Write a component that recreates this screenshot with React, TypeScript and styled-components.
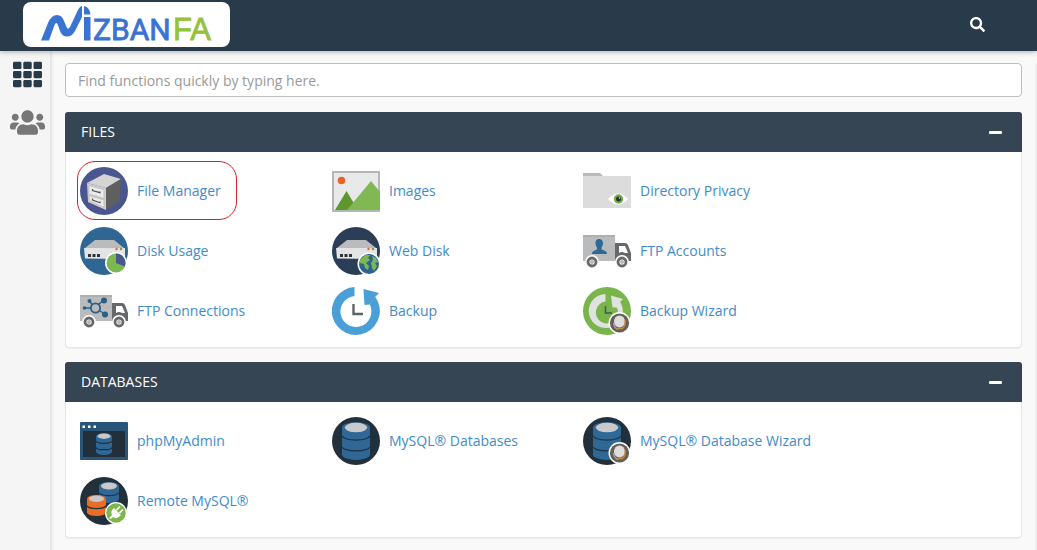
import React, { useState } from "react";
import styled, { createGlobalStyle } from "styled-components";
import { FaSearch, FaTh, FaUsers } from "react-icons/fa";

const GlobalStyle = createGlobalStyle`
  *, *::before, *::after { box-sizing: border-box; }
  body {
    margin: 0;
    background: #f9f9f9;
    color: #333;
    font-family: "Open Sans", "Noto Sans", sans-serif;
    font-size: 14px;
    line-height: 20px;
  }
  button, input { font: inherit; }
`;

const Page = styled.div`
  display: flex;
  flex-direction: column;
  min-height: 100vh;
`;

const TopBar = styled.header`
  position: relative;
  z-index: 1;
  display: flex;
  align-items: center;
  justify-content: space-between;
  height: 51px;
  padding: 0 48px 2px 23px;
  background: #293a4a;
  box-shadow: 0 1px 5px rgba(0, 0, 0, 0.3);
`;

const Logo = styled.a`
  display: flex;
  width: 207px;
  height: 45px;
  border-radius: 8px;
  background: #fff;
  text-decoration: none;
`;

const IconButton = styled.button<{ $color: string }>`
  display: flex;
  align-items: center;
  justify-content: center;
  padding: 4px;
  border: 0;
  background: none;
  color: ${(p) => p.$color};
  cursor: pointer;
`;

const Shell = styled.div`
  display: flex;
  flex: 1;
`;

const SideNav = styled.nav`
  display: flex;
  flex-direction: column;
  align-items: center;
  gap: 8px;
  width: 50px;
  padding: 5px 0 0 5px;
  background: #f5f5f5;
  box-shadow: 0 0 5px rgba(0, 0, 0, 0.2);
`;

const Main = styled.main`
  flex: 1;
  min-width: 0;
  margin-top: 12px;
  padding: 0 13px 12px 15px;
  border-right: 2px solid #efefef;
`;

const QuickFind = styled.input`
  display: block;
  width: 100%;
  height: 34px;
  margin-bottom: 15px;
  padding: 6px 12px;
  border: 1px solid #bfbfbf;
  border-radius: 4px;
  background: #fff;
  color: #555;
  &::placeholder { color: #999; opacity: 1; }
`;

const Panel = styled.section`
  margin-bottom: 14px;
  border-radius: 4px;
  background: #fff;
  box-shadow: inset 0 0 0 1px #e6e6e6, 0 1px 1px rgba(0, 0, 0, 0.05);
`;

const PanelHead = styled.div`
  display: flex;
  align-items: center;
  justify-content: space-between;
  height: 40px;
  padding: 0 16px;
  border-radius: 3px 3px 0 0;
  background: #354554;
  color: #fff;
`;

const PanelTitle = styled.h2`
  margin: 0;
  font-size: 14px;
  font-weight: 400;
`;

const Collapse = styled.button`
  display: flex;
  align-items: center;
  height: 24px;
  padding: 0 4px;
  border: 0;
  background: none;
  cursor: pointer;
  &::before {
    content: "";
    width: 13px;
    height: 3px;
    border-radius: 1px;
    background: #fff;
  }
`;

const PanelGrid = styled.div`
  display: grid;
  grid-template-columns: 252fr 251fr 424fr;
  row-gap: 12px;
  padding: 15px 15px 13px;
`;

const Feature = styled.a<{ $marked?: boolean }>`
  position: relative;
  display: flex;
  align-items: center;
  justify-self: start;
  gap: 9px;
  height: 48px;
  color: #428bca;
  text-decoration: none;
  white-space: nowrap;
  svg { flex: none; }
  &::after {
    content: "";
    display: ${(p) => (p.$marked ? "block" : "none")};
    position: absolute;
    inset: -6px -16px -5px -3px;
    border: 1px solid #dc1e26;
    border-radius: 18px;
  }
`;

const Art = ({ children }: { children: React.ReactNode }) => (
  <svg width="48" height="48" viewBox="0 0 48 48" aria-hidden="true">{children}</svg>
);

const Disc = ({ fill }: { fill: string }) => <circle cx="24" cy="24" r="24" fill={fill} />;

const Brand = () => (
  <svg width="207" height="45" viewBox="0 0 207 45" aria-label="Mizbanfa" role="img">
    <path d="M18 38.500L25 21Q28.500 13 34 13Q39 13 41 19L44 26Q45.500 28 47.500 24L54 10Q56.500 4.500 59 4V15L52 29Q49 34.500 44 34.500Q39 34.500 37 29L34.500 22Q33 19.500 31.500 23L26 38.500Z" fill="#3a74d2" />
    <path d="M61 4Q67 5.500 67.500 12.500H61Z" fill="#3a74d2" />
    <rect x="61" y="15" width="6.500" height="23.500" fill="#3a74d2" />
    <text x="70" y="38" fill="#3a74d2" stroke="#3a74d2" strokeWidth="0.800" fontFamily="Roboto, sans-serif" fontSize="30">ZBAN</text>
    <text x="150" y="38" fill="#94c23c" stroke="#94c23c" strokeWidth="0.800" fontFamily="Liberation Sans, sans-serif" fontSize="31">FA</text>
  </svg>
);

const FileManagerIcon = () => (
  <Art>
    <Disc fill="#4a5690" />
    <path d="M7 16 24 7 41 12 26 21Z" fill="#d4d4d4" />
    <path d="M7 16 26 21V43L8 35Z" fill="#cfcfcf" />
    <path d="M26 21 41 12 40 34 26 43Z" fill="#5f5f5f" />
    <path d="M9 18.500 24 22.500V31.500L9 27ZM9 28.500 24 33V40.500L9.500 34Z" fill="#ebebeb" stroke="#b5b5b5" strokeWidth="0.700" />
    <path d="M12.500 22V23.500L20 25.700V24.500M12.500 31.500V33L20 35.700V34.500" fill="none" stroke="#555" strokeWidth="1.200" />
  </Art>
);

const Server = () => (
  <>
    <path d="M5 21 15 13H34L44 21Z" fill="#b9bbbd" />
    <path d="M4 21H45V31L43 32 5 31.500Z" fill="#e3e4e5" />
    <path d="M8 27H11V30H8ZM12.500 27H15.500V30H12.500ZM17 27H20V30H17Z" fill="#333" />
    <circle cx="36.500" cy="22" r="1.200" fill="#e8632a" />
    <circle cx="41" cy="22" r="1.200" fill="#6aa33d" />
  </>
);

const DiskUsageIcon = () => (
  <Art>
    <Disc fill="#2f6694" />
    <Server />
    <circle cx="36" cy="36" r="11" fill="#fff" />
    <circle cx="36" cy="36" r="9.500" fill="#7cb850" />
    <path d="M36 36V26.500A9.500 9.500 0 0 1 44.800 39.500Z" fill="#4a5690" />
  </Art>
);

const WebDiskIcon = () => (
  <Art>
    <Disc fill="#2c3e57" />
    <Server />
    <circle cx="37" cy="37" r="11.500" fill="#fff" />
    <circle cx="37" cy="37" r="10" fill="#2d6392" />
    <path d="M28 33 33 28 38 28 36 31 38 33 34 36 37 39 36 43 33 41 32 37 28 36ZM40 29 44 31 46 35 43 36 45 39 42 44 40 41 39 36 41 33Z" fill="#7cb850" />
  </Art>
);

const Truck = ({ children }: { children: React.ReactNode }) => (
  <Art>
    <path d="M0 8H32V34H0Z" fill="#b9bbbd" />
    <path d="M0 8H32V10H0Z" fill="#adafb1" />
    <path d="M32 16H42Q44 16 45 18L48 26V34H32ZM36 19V26Q39 24 42 26H45L42 19Z" fill="#666869" fillRule="evenodd" />
    {children}
    {[9, 39].map((x) => (
      <g key={x}>
        <circle cx={x} cy="35" r="7" fill="#fff" />
        <circle cx={x} cy="35" r="4" fill="#fff" stroke="#666869" strokeWidth="2.800" />
        <circle cx={x} cy="35" r="2" fill="#b5b7b8" />
      </g>
    ))}
  </Art>
);

const FtpAccountsIcon = () => (
  <Truck>
    <path d="M16 12C21 12 20.500 18 18.500 20.500V22C20 24 24 23 24 27H9C9 23 13 24 14 22V20.500C12 18 11.500 12 16 12Z" fill="#2d6897" />
  </Truck>
);

const FtpConnectionsIcon = () => (
  <Truck>
    <path d="M9 14 15 20 24 13M4 21H15L25 27" fill="none" stroke="#2d5e87" strokeWidth="1.400" />
    <circle cx="15.500" cy="21" r="4.600" fill="#b9bbbd" stroke="#2d5e87" strokeWidth="1.800" />
    <g fill="#2d5e87">
      <circle cx="9.500" cy="14" r="2" /><circle cx="24" cy="13.500" r="3" />
      <circle cx="4.500" cy="21" r="1.800" /><circle cx="25" cy="27.500" r="3" />
    </g>
  </Truck>
);

const ImagesIcon = () => (
  <Art>
    <path d="M0 4H48V45H0Z" fill="#b5b6b6" />
    <path d="M2 6H46V43H2Z" fill="#e8e9ea" />
    <circle cx="9.500" cy="13.500" r="3.800" fill="#e8632a" />
    <path d="M3 43 14.500 24 26 43Z" fill="#5d982f" />
    <path d="M15 43 39 14 48 25V43Z" fill="#80b954" />
  </Art>
);

const PrivacyIcon = () => (
  <Art>
    <path d="M0 6H17L20 9V17H0Z" fill="#b9b9b9" />
    <path d="M0 9H48V41H0Z" fill="#dcdcdc" />
    <path d="M25 32Q35 21 45 32Q35 43 25 32Z" fill="#fff" />
    <circle cx="35.500" cy="32" r="4.700" fill="#7aad49" />
    <circle cx="35.500" cy="32" r="2.500" fill="#26352c" />
    <circle cx="36.500" cy="31" r="0.700" fill="#fff" />
  </Art>
);

const BackupIcon = () => (
  <Art>
    <path d="M22.500 0V9A15.500 15.500 0 1 0 37.800 17.500L43 9.500A24 24 0 1 1 22.500 0Z" fill="#4b9fd8" />
    <path d="M31.500 2 47 6 43.500 9.500 38 17.500 32.500 18Z" fill="#4b9fd8" />
    <path d="M21.500 17V27H31" fill="none" stroke="#606466" strokeWidth="2.400" />
  </Art>
);

const WizardBadge = () => (
  <>
    <circle cx="36.500" cy="36" r="11" fill="#fff" />
    <circle cx="36.500" cy="36" r="9.600" fill="#665f57" />
    <ellipse cx="36.500" cy="34.500" rx="5.500" ry="6" fill="#dedede" />
    <path d="M42 33Q43 38 39.500 41.500H35" fill="none" stroke="#c78b3f" strokeWidth="1.400" />
    <path d="M30.500 36Q31 41 35 42.500" fill="none" stroke="#aaa69e" strokeWidth="1.400" />
  </>
);

const BackupWizardIcon = () => (
  <Art>
    <Disc fill="#7ab54c" />
    <path d="M22.500 7V14.500A11 11 0 1 0 33.500 20L36.500 14A17 17 0 1 1 22.500 7Z" fill="#dfe2de" />
    <path d="M28 8.500 40 12 37 15 34.500 20.500 29.500 20.500Z" fill="#dfe2de" />
    <path d="M22.500 19V26H29" fill="none" stroke="#47506f" strokeWidth="1.500" />
    <WizardBadge />
  </Art>
);

type CylinderProps = { x: number; y: number; w: number; h: number; fill: string; bands: number };

/* Database drum: a rounded body, its pale lid and the seams between the platters. */
const Cylinder = ({ x, y, w, h, fill, bands }: CylinderProps) => {
  const r = w / 2;
  const e = w / 5;
  const step = (h - e) / bands;
  return (
    <>
      <path d={`M${x} ${y + e}A${r} ${e} 0 0 1 ${x + w} ${y + e}V${y + h - e}A${r} ${e} 0 0 1 ${x} ${y + h - e}Z`} fill={fill} />
      <ellipse cx={x + r} cy={y + e} rx={r * 0.8} ry={e * 0.85} fill="#c9c8ca" />
      {Array.from({ length: bands - 1 }, (_, i) => (
        <path
          key={i}
          d={`M${x} ${y + e / 2 + step * (i + 1)}A${r} ${e * 0.8} 0 0 0 ${x + w} ${y + e / 2 + step * (i + 1)}`}
          fill="none"
          stroke="#22323f"
          strokeWidth="1.200"
        />
      ))}
    </>
  );
};

const DatabasesIcon = ({ wizard }: { wizard?: boolean }) => (
  <Art>
    <Disc fill="#22303c" />
    <Cylinder x={10} y={5} w={28} h={38} fill="#2f6797" bands={3} />
    {wizard && <WizardBadge />}
  </Art>
);

const PhpMyAdminIcon = () => (
  <Art>
    <rect y="5" width="48" height="38" rx="1" fill="#295579" />
    <path d="M3 14H45V40H3Z" fill="#22303c" />
    <path d="M2.500 8.500H5V11H2.500ZM8 8.500H10.500V11H8ZM13.500 8.500H16V11H13.500Z" fill="#fff" />
    <Cylinder x={16} y={16} w={16} h={22} fill="#2f6797" bands={3} />
  </Art>
);

const RemoteMysqlIcon = () => (
  <Art>
    <Disc fill="#22303c" />
    <Cylinder x={19} y={5} w={20} h={21} fill="#2f6797" bands={2} />
    <Cylinder x={7} y={18} w={19} h={21} fill="#e96d25" bands={2} />
    <circle cx="36" cy="36" r="11" fill="#fff" />
    <circle cx="36" cy="36" r="9.700" fill="#7cb64d" />
    <path d="M34 31 41 38Q37 43 33 40L31 42 29 41 32 38Q30 34 34 31Z" fill="#fff" />
    <path d="M36.500 33 40 29.500M39.500 36 43 32.500" fill="none" stroke="#fff" strokeWidth="1.700" />
  </Art>
);

type Item = { label: string; icon: React.ReactNode; marked?: boolean };

const files: Item[] = [
  { label: "File Manager", icon: <FileManagerIcon />, marked: true },
  { label: "Images", icon: <ImagesIcon /> },
  { label: "Directory Privacy", icon: <PrivacyIcon /> },
  { label: "Disk Usage", icon: <DiskUsageIcon /> },
  { label: "Web Disk", icon: <WebDiskIcon /> },
  { label: "FTP Accounts", icon: <FtpAccountsIcon /> },
  { label: "FTP Connections", icon: <FtpConnectionsIcon /> },
  { label: "Backup", icon: <BackupIcon /> },
  { label: "Backup Wizard", icon: <BackupWizardIcon /> },
];

const databases: Item[] = [
  { label: "phpMyAdmin", icon: <PhpMyAdminIcon /> },
  { label: "MySQL® Databases", icon: <DatabasesIcon /> },
  { label: "MySQL® Database Wizard", icon: <DatabasesIcon wizard /> },
  { label: "Remote MySQL®", icon: <RemoteMysqlIcon /> },
];

const FeaturePanel = ({ title, items }: { title: string; items: Item[] }) => {
  const [open, setOpen] = useState(true);
  return (
    <Panel>
      <PanelHead>
        <PanelTitle>{title}</PanelTitle>
        <Collapse aria-label={`Toggle ${title}`} aria-expanded={open} onClick={() => setOpen(!open)} />
      </PanelHead>
      {open && (
        <PanelGrid>
          {items.map((item) => (
            <Feature key={item.label} href="#" $marked={item.marked}>
              {item.icon}
              <span>{item.label}</span>
            </Feature>
          ))}
        </PanelGrid>
      )}
    </Panel>
  );
};

export default function App() {
  return (
    <Page>
      <GlobalStyle />
      <TopBar>
        <Logo href="#" aria-label="Home"><Brand /></Logo>
        <IconButton $color="#fff" aria-label="Search"><FaSearch size={15} /></IconButton>
      </TopBar>
      <Shell>
        <SideNav>
          <IconButton $color="#293a4a" aria-label="Home"><FaTh size={29} /></IconButton>
          <IconButton $color="#777" aria-label="User Manager"><FaUsers size={35} /></IconButton>
        </SideNav>
        <Main>
          <QuickFind type="text" aria-label="Find functions" placeholder="Find functions quickly by typing here." />
          <FeaturePanel title="FILES" items={files} />
          <FeaturePanel title="DATABASES" items={databases} />
        </Main>
      </Shell>
    </Page>
  );
}
